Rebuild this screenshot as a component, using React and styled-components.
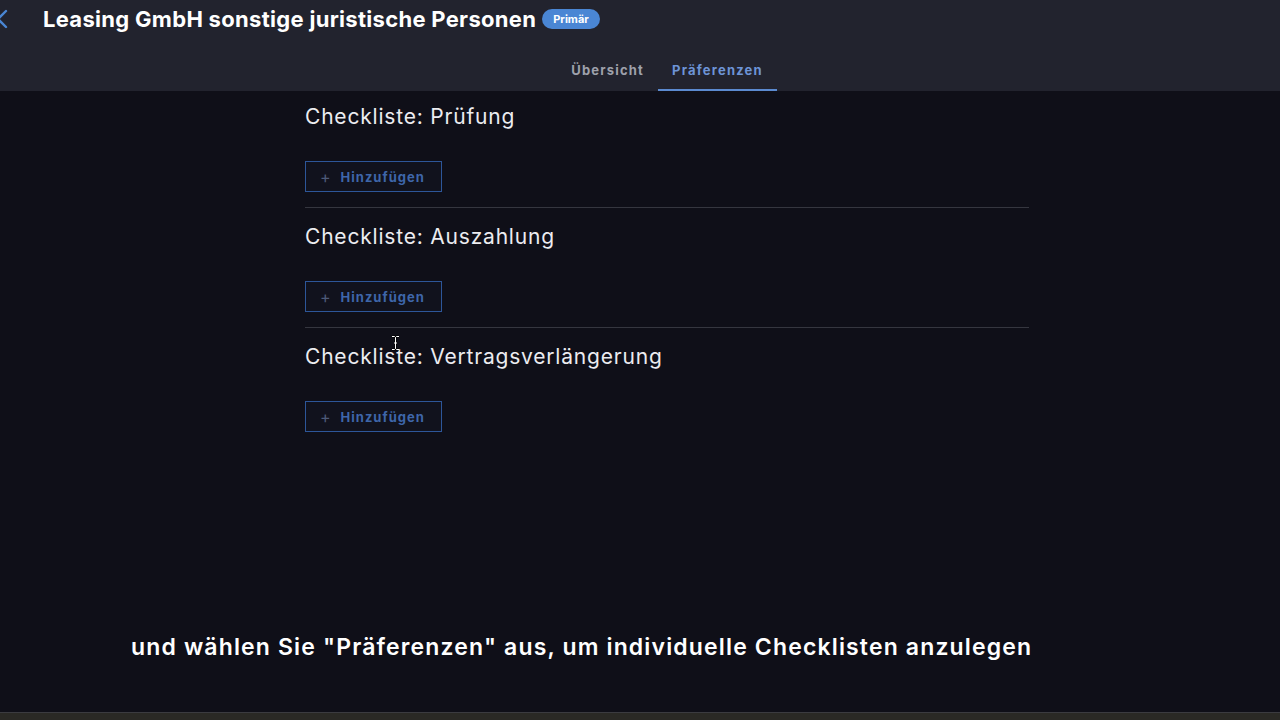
import React from 'react'
import styled, { createGlobalStyle } from 'styled-components'

const GlobalStyle = createGlobalStyle`
html, body {
    margin:0;
    padding:0;
    background:#0f0f18;
}
body {
    font-family:Inter, "Noto Sans", sans-serif;
}
`

const Page = styled.div`
position:relative;
width:1280px;
height:720px;
display:flex;
flex-direction:column;
background:#0f0f18;
overflow:hidden;
`

const Header = styled.div`
height:91px;
background:#22232e;
display:flex;
flex-direction:column;
flex-shrink:0;
`

const TitleRow = styled.div`
height:38px;
display:flex;
align-items:center;
`

const BackButton = styled.div`
width:43px;
height:38px;
display:flex;
align-items:center;
margin-left:-6px;
margin-right:6px;
`

const Title = styled.h1`
margin:0;
color:#fff;
font-size:22px;
font-weight:700;
letter-spacing:0.3px;
`

const Badge = styled.span`
margin-left:6px;
background:#4a86d4;
color:#fff;
font-size:11px;
font-weight:700;
padding:4px 11px;
border-radius:11px;
line-height:12px;
`

const TabBar = styled.div`
flex:1;
display:flex;
justify-content:center;
align-items:flex-end;
padding-left:54px;
`

const Tab = styled.div`
padding:4px 14px 0;
height:44px;
box-sizing:border-box;
display:flex;
align-items:center;
font-size:13px;
font-weight:700;
letter-spacing:1.2px;
color:${p => p.active ? '#6d94d6' : '#9ea1ab'};
border-bottom:2px solid ${p => p.active ? '#5b8ad0' : 'transparent'};
`

const Main = styled.div`
flex:1;
padding-left:305px;
`

const Column = styled.div`
width:724px;
`

const Section = styled.div`
padding:${p => p.first ? '11px' : '14px'} 0 15px;
border-bottom:${p => p.last ? 'none' : '1px solid #35363f'};
`

const Heading = styled.h2`
margin:0 0 29px;
font-size:21px;
line-height:30px;
font-weight:400;
color:#ececf0;
letter-spacing:0.8px;
`

const AddButton = styled.button`
display:flex;
align-items:center;
gap:9px;
height:31px;
width:137px;
padding:0 0 0 14px;
background:#11121d;
border:1px solid #2d5699;
color:#3e66aa;
font-family:inherit;
font-size:13px;
font-weight:700;
letter-spacing:1px;
span{
    color:#4d5a78;
    font-size:16px;
    font-weight:400;
}
`

const Caption = styled.div`
padding:0 0 50px 131px;
font-size:23px;
line-height:30px;
font-weight:600;
color:#fff;
letter-spacing:1.15px;
white-space:nowrap;
`

const BottomStrip = styled.div`
height:7px;
background:#2a2925;
border-top:1px solid #3b3b40;
`

const Cursor = styled.svg`
position:absolute;
left:391px;
top:335px;
`

const sections = ['Prüfung', 'Auszahlung', 'Vertragsverlängerung']

const App = () => {
    return (
        <Page>
            <GlobalStyle />
            <Header>
                <TitleRow>
                    <BackButton>
                        <svg width="16" height="20" viewBox="0 0 16 20">
                            <path d="M12 2 L4 10 L12 18" fill="none" stroke="#4a86d4" strokeWidth="2.4" strokeLinecap="round" strokeLinejoin="round" />
                        </svg>
                    </BackButton>
                    <Title>Leasing GmbH sonstige juristische Personen</Title>
                    <Badge>Primär</Badge>
                </TitleRow>
                <TabBar>
                    <Tab>Übersicht</Tab>
                    <Tab active>Präferenzen</Tab>
                </TabBar>
            </Header>
            <Main>
                <Column>
                    {sections.map((s, i) => (
                        <Section key={s} first={i === 0} last={i === sections.length - 1}>
                            <Heading>Checkliste: {s}</Heading>
                            <AddButton><span>+</span>Hinzufügen</AddButton>
                        </Section>
                    ))}
                </Column>
            </Main>
            <Caption>und wählen Sie "Präferenzen" aus, um individuelle Checklisten anzulegen</Caption>
            <BottomStrip />
            <Cursor width="9" height="16" viewBox="0 0 9 16">
                <path d="M1 1.5 H3.5 L4.5 2.5 L5.5 1.5 H8 M4.5 2.5 V13.5 M1 14.5 H3.5 L4.5 13.5 L5.5 14.5 H8 M3 8 H6" fill="none" stroke="#000" strokeWidth="2.2" />
                <path d="M1 1.5 H3.5 L4.5 2.5 L5.5 1.5 H8 M4.5 2.5 V13.5 M1 14.5 H3.5 L4.5 13.5 L5.5 14.5 H8 M3 8 H6" fill="none" stroke="#fff" strokeWidth="1" />
            </Cursor>
        </Page>
    )
}

export default App
